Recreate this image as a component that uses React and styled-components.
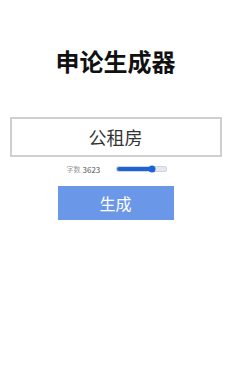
import styled, { createGlobalStyle } from "styled-components";
import { useState } from "react";

const GlobalStyle = createGlobalStyle`
  html, body {
    margin: 0;
    padding: 0;
    background: #fff;
    font-family: "Noto Sans CJK SC", "Liberation Sans", sans-serif;
  }
`;

const Page = styled.div`
  width: 231px;
  display: flex;
  flex-direction: column;
  align-items: center;
  padding-top: 44px;
`;

const Title = styled.h1`
  margin: 0;
  font-size: 24px;
  line-height: 34px;
  font-weight: 700;
  color: #111;
`;

const TopicInput = styled.input`
  box-sizing: border-box;
  margin-top: 39px;
  width: 212px;
  height: 40px;
  border: 2px solid #cfcfcf;
  outline: none;
  text-align: center;
  font-family: inherit;
  font-size: 18px;
  color: #333;
  padding: 0;
`;

const Row = styled.div`
  display: flex;
  align-items: center;
  margin-top: 5px;
  height: 14px;
  margin-left: 2px;
`;

const Label = styled.span`
  font-size: 7px;
  color: #999;
`;

const Count = styled.span`
  font-size: 8px;
  color: #555;
  margin-left: 2px;
  width: 33px;
`;

const Track = styled.div`
  position: relative;
  width: 49px;
  height: 4px;
  border-radius: 2px;
  background: #e4e8ee;
  border: 1px solid #d0d6de;
`;

const Fill = styled.div`
  height: 100%;
  border-radius: 2px;
  background: #1e63d6;
`;

const Thumb = styled.div`
  position: absolute;
  top: 50%;
  width: 7px;
  height: 7px;
  border-radius: 50%;
  background: #1e63d6;
  transform: translate(-50%, -50%);
`;

const Button = styled.button`
  margin-top: 10px;
  width: 116px;
  height: 34px;
  border: none;
  background: #6b97e8;
  color: #fff;
  font-family: inherit;
  font-size: 16px;
  cursor: pointer;
`;

export default function App() {
  const [topic, setTopic] = useState("公租房");
  const count = 3623;
  const pct = 72;
  return (
    <>
      <GlobalStyle />
      <Page>
        <Title>申论生成器</Title>
        <TopicInput value={topic} onChange={(e) => setTopic(e.target.value)} />
        <Row>
          <Label>字数</Label>
          <Count>{count}</Count>
          <Track>
            <Fill style={{ width: `${pct}%` }} />
            <Thumb style={{ left: `${pct}%` }} />
          </Track>
        </Row>
        <Button>生成</Button>
      </Page>
    </>
  );
}
